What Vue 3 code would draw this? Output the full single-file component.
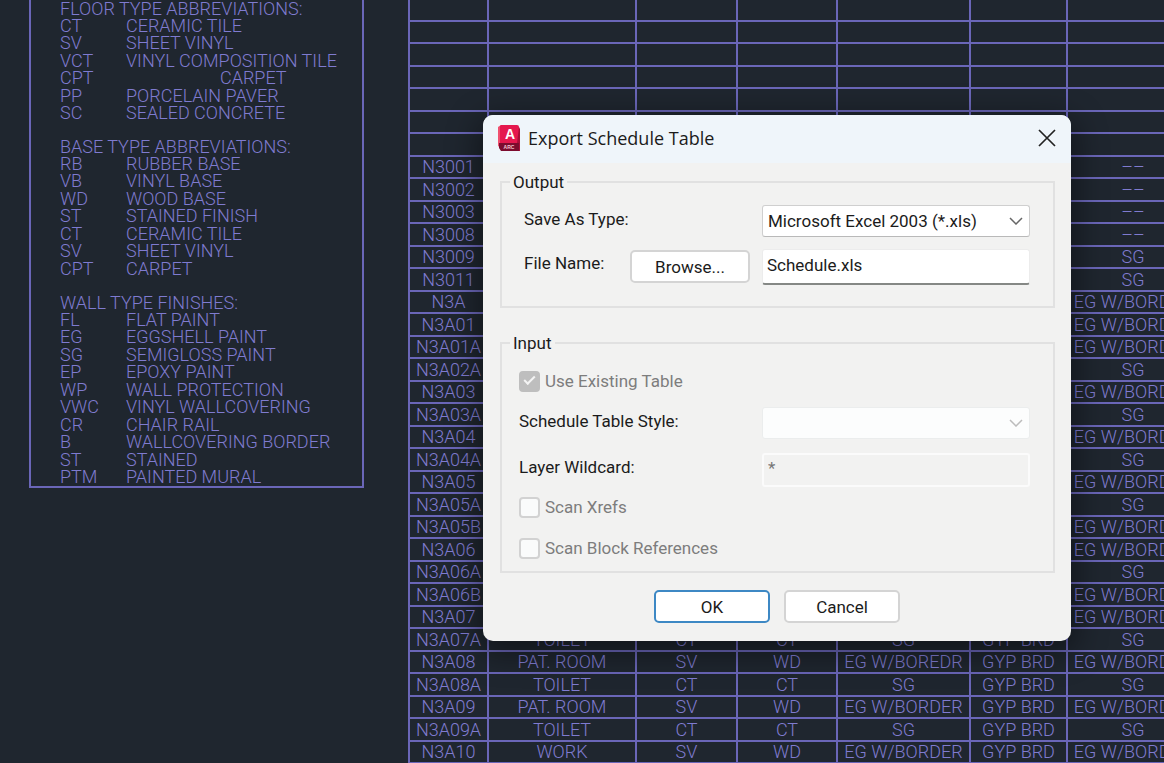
<script setup>
import { ref } from 'vue'

const legend = [
  {
    title: 'FLOOR TYPE ABBREVIATIONS:',
    items: [
      ['CT', 'CERAMIC TILE'],
      ['SV', 'SHEET VINYL'],
      ['VCT', 'VINYL COMPOSITION TILE'],
      ['CPT', 'CARPET', true],
      ['PP', 'PORCELAIN PAVER'],
      ['SC', 'SEALED CONCRETE'],
    ],
  },
  {
    title: 'BASE TYPE ABBREVIATIONS:',
    items: [
      ['RB', 'RUBBER BASE'],
      ['VB', 'VINYL BASE'],
      ['WD', 'WOOD BASE'],
      ['ST', 'STAINED FINISH'],
      ['CT', 'CERAMIC TILE'],
      ['SV', 'SHEET VINYL'],
      ['CPT', 'CARPET'],
    ],
  },
  {
    title: 'WALL TYPE FINISHES:',
    items: [
      ['FL', 'FLAT PAINT'],
      ['EG', 'EGGSHELL PAINT'],
      ['SG', 'SEMIGLOSS PAINT'],
      ['EP', 'EPOXY PAINT'],
      ['WP', 'WALL PROTECTION'],
      ['VWC', 'VINYL WALLCOVERING'],
      ['CR', 'CHAIR RAIL'],
      ['B', 'WALLCOVERING BORDER'],
      ['ST', 'STAINED'],
      ['PTM', 'PAINTED MURAL'],
    ],
  },
]

const SG = 'SG'
const EG = 'EG W/BORDER'
const blank = () => ['', '', '', '', '', '', '']
const room = (no, last) => [no, '', '', '', '', '', last]

const rows = [
  blank(), blank(), blank(), blank(), blank(), blank(), blank(),
  room('N3001', '––'),
  room('N3002', '––'),
  room('N3003', '––'),
  room('N3008', '––'),
  room('N3009', SG),
  room('N3011', SG),
  room('N3A', EG),
  room('N3A01', EG),
  room('N3A01A', EG),
  room('N3A02A', SG),
  room('N3A03', EG),
  room('N3A03A', SG),
  room('N3A04', EG),
  room('N3A04A', SG),
  room('N3A05', EG),
  room('N3A05A', SG),
  room('N3A05B', EG),
  room('N3A06', EG),
  room('N3A06A', SG),
  room('N3A06B', EG),
  room('N3A07', EG),
  ['N3A07A', 'TOILET', 'CT', 'CT', SG, 'GYP BRD', SG],
  ['N3A08', 'PAT. ROOM', 'SV', 'WD', 'EG W/BOREDR', 'GYP BRD', EG],
  ['N3A08A', 'TOILET', 'CT', 'CT', SG, 'GYP BRD', SG],
  ['N3A09', 'PAT. ROOM', 'SV', 'WD', EG, 'GYP BRD', EG],
  ['N3A09A', 'TOILET', 'CT', 'CT', SG, 'GYP BRD', SG],
  ['N3A10', 'WORK', 'SV', 'WD', EG, 'GYP BRD', EG],
]

const saveType = ref('xls2003')
const fileName = ref('Schedule.xls')
const wildcard = ref('*')
const useExisting = ref(true)
const scanXrefs = ref(false)
const scanBlocks = ref(false)
</script>

<template>
  <main class="canvas">
    <aside class="legend">
      <section v-for="group in legend" :key="group.title" class="legend__group">
        <h2>{{ group.title }}</h2>
        <dl>
          <div v-for="item in group.items" :key="item[0]" class="legend__row">
            <dt>{{ item[0] }}</dt>
            <dd :class="{ 'is-indented': item[2] }">{{ item[1] }}</dd>
          </div>
        </dl>
      </section>
    </aside>

    <table class="schedule">
      <colgroup>
        <col class="c-room" /><col class="c-name" /><col class="c-floor" /><col class="c-base" />
        <col class="c-wall" /><col class="c-mat" /><col class="c-last" />
      </colgroup>
      <tbody>
        <tr v-for="(row, i) in rows" :key="i">
          <td v-for="(cell, j) in row" :key="j">{{ cell }}</td>
        </tr>
      </tbody>
    </table>

    <form class="dialog" role="dialog" aria-labelledby="dlg-title" @submit.prevent>
      <header class="dialog__bar">
        <svg class="dialog__logo" width="24" height="28" viewBox="0 0 24 28" aria-hidden="true">
          <path d="M1 3 4 1v23l-3-2z" fill="#f0506f" />
          <path d="M4 1h16a2 2 0 0 1 2 2v16H3V2z" fill="#e5184e" />
          <path d="M22 3l1 2v22h-2l-1-8z" fill="#a80f38" />
          <path d="M2 19h20v8H4l-2-3z" fill="#7c0c2e" />
          <text x="13" y="15" text-anchor="middle" class="logo-a">A</text>
          <text x="12" y="25" text-anchor="middle" class="logo-sub">ARC</text>
        </svg>
        <h1 id="dlg-title">Export Schedule Table</h1>
        <button type="button" class="dialog__close" aria-label="Close">
          <svg width="18" height="18" viewBox="0 0 18 18" aria-hidden="true">
            <path d="M1 1l16 16M17 1L1 17" fill="none" stroke="#222" stroke-width="1.7" />
          </svg>
        </button>
      </header>

      <fieldset class="box box--output">
        <legend>Output</legend>
        <div class="row">
          <label for="save-type" class="row__label">Save As Type:</label>
          <div class="drop">
            <select id="save-type" v-model="saveType">
              <option value="xls2003">Microsoft Excel 2003 (*.xls)</option>
            </select>
            <svg width="14" height="8" viewBox="0 0 14 8" aria-hidden="true"><path d="M1 1l6 6 6-6" /></svg>
          </div>
        </div>
        <div class="row">
          <label for="file-name">File Name:</label>
          <button type="button" class="btn">Browse...</button>
          <input id="file-name" v-model="fileName" type="text" class="text" />
        </div>
      </fieldset>

      <fieldset class="box box--input">
        <legend>Input</legend>
        <label class="check check--table"><input v-model="useExisting" type="checkbox" disabled />Use Existing Table</label>
        <div class="row">
          <label for="table-style" class="row__label">Schedule Table Style:</label>
          <div class="drop">
            <select id="table-style" disabled></select>
            <svg width="14" height="8" viewBox="0 0 14 8" aria-hidden="true"><path d="M1 1l6 6 6-6" /></svg>
          </div>
        </div>
        <div class="row">
          <label for="wildcard" class="row__label">Layer Wildcard:</label>
          <input id="wildcard" v-model="wildcard" type="text" class="text" disabled />
        </div>
        <div class="scan">
          <label class="check"><input v-model="scanXrefs" type="checkbox" disabled />Scan Xrefs</label>
          <label class="check"><input v-model="scanBlocks" type="checkbox" disabled />Scan Block References</label>
        </div>
      </fieldset>

      <footer class="dialog__foot">
        <button type="submit" class="btn btn--default">OK</button>
        <button type="button" class="btn">Cancel</button>
      </footer>
    </form>
  </main>
</template>

<style>
body{margin:0;background:#1f262f}
</style>

<style scoped>
.canvas{--ink:#7f7bd0;--line:#6a66b8;position:relative;display:flex;align-items:flex-start;
  height:100vh;overflow:hidden;box-sizing:border-box;padding-left:29px;background:#1f262f;color:var(--ink);
  font-family:Roboto,"Liberation Sans",sans-serif;font-size:18px;font-weight:300}

/* abbreviations legend */
.legend{flex:none;box-sizing:border-box;width:335px;padding:0 0 1px 29px;border:2px solid var(--line);border-top:0;
  line-height:17px;white-space:nowrap}
.legend__group + .legend__group{margin-top:17px}
.legend h2{margin:0;font-size:18px;font-weight:300}
.legend dl{margin:0}
.legend__row{display:flex;height:17px}
.legend__row:nth-child(even){height:18px}
.legend__row:last-child{height:17px}
.legend dt{width:66px}
.legend dd{margin:0}
.legend dd.is-indented{padding-left:94px}

/* room schedule */
.schedule{flex:none;width:792px;margin-left:44px;table-layout:fixed;border-collapse:separate;border-spacing:0;
  border-left:2px solid var(--line);line-height:20px;white-space:nowrap}
.schedule td{box-sizing:border-box;height:23px;padding:0;text-align:center;
  border-right:2px solid var(--line);border-bottom:2px solid var(--line)}
.schedule tr:nth-child(even) td{height:22px}
.schedule tr:first-child td{height:22px}
.c-room{width:79px}
.c-name{width:148px}
.c-floor{width:101px}
.c-base{width:100px}
.c-wall{width:133px}
.c-mat{width:97px}
.c-last{width:132px}

/* export window */
.dialog{position:absolute;left:483px;top:115px;box-sizing:border-box;width:588px;padding:0 16px 18px 17px;
  border-radius:10px;background:#f2f2f1;color:#1b1b1b;font-size:17px;font-weight:400;overflow:hidden;
  box-shadow:0 8px 32px 4px rgba(0,0,0,.45)}
.dialog__bar{display:flex;align-items:center;height:48px;margin:0 -16px 8px -17px;padding:0 15px 0 14px;background:#eff5fa}
.dialog__logo{flex:none;margin-top:-2px}
.logo-a{font:700 14px "Liberation Sans",sans-serif;fill:#fff}
.logo-sub{font:700 5px "Liberation Sans",sans-serif;fill:#f5c6d2}
.dialog h1{flex:1;margin:0 0 2px 7px;font:400 18px/24px "Open Sans","Noto Sans",sans-serif}
.dialog__close{display:flex;margin-bottom:2px;padding:0;border:0;background:none}

.box{box-sizing:border-box;min-width:0;margin:0;padding:12px 23px 21px 22px;border:2px solid #e1e1e1;
  display:grid;gap:12px}
.box legend{height:22px;margin-left:-14px;padding:0 3px;line-height:22px}
.box--input{margin-top:24px;padding:17px 23px 13px 17px;gap:14px}
.box--input legend{margin-left:-9px}
.row{display:grid;grid-template-columns:1fr 120px 268px;column-gap:12px;align-items:start}
.row label{line-height:28px}
.row .row__label{grid-column:span 2}

.drop{position:relative}
.drop select{display:block;width:100%;height:32px;padding:0 28px 0 5px;border:1px solid #cfcfcf;border-bottom-color:#b9b9b9;
  border-radius:3px;background:#fff;color:inherit;font:inherit;appearance:none}
.drop select:disabled{border-color:#ebeded;background:#fcfdfd;opacity:1}
.drop svg{position:absolute;right:7px;top:12px;fill:none;stroke:#666;stroke-width:1.5;pointer-events:none}
.drop select:disabled + svg{stroke:#bcbcbc}
.text{box-sizing:border-box;width:100%;height:36px;padding:0 4px 4px;border:1px solid #ececec;border-bottom:2px solid #858885;
  border-radius:3px;background:#fff;color:inherit;font:inherit}
.text:disabled{height:34px;border:2px solid #fbfbfb;background:#f2f2f1;color:#777}

.check{display:flex;align-items:center;gap:5px;height:20px;color:#7d7d7d}
.check--table{margin-bottom:2px}
.check input{display:grid;place-items:center;flex:none;width:21px;height:21px;margin:0;border:2px solid #d2d2d2;
  border-radius:4px;background:#fafbfb;appearance:none}
.check input:checked{border-color:#bebebe;background:#bebebe}
.check input:checked::after{content:"";width:9px;height:4px;margin-top:-4px;border:solid #f4f4f4;border-width:0 0 2px 2px;
  transform:rotate(-45deg)}
.scan{display:grid;gap:21px;margin-top:-4px}

.btn{box-sizing:border-box;height:33px;padding:0;border:2px solid #d4d4d4;border-radius:5px;background:#fff;
  color:inherit;font:inherit}
.row .btn{margin-top:1px}
.btn--default{border-color:#3d88c4}
.dialog__foot{display:flex;gap:14px;margin:17px 0 0 154px}
.dialog__foot .btn{width:116px}
</style>
